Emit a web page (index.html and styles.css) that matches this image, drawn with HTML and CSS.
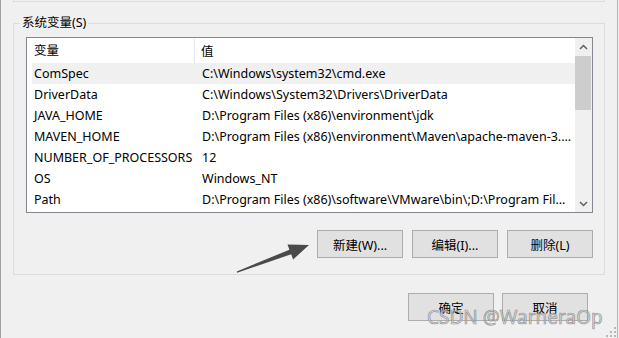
FILE: index.html
```html
<html lang="zh-CN">
<head>
    <meta charset="utf-8">
    <link rel="stylesheet" href="styles.css">
</head>
<body>
<div class="window">
    <div class="prev-group"></div>

    <fieldset class="group">
        <legend>系统变量(S)</legend>
        <div class="listbox">
            <div class="list">
                <div class="list-head">
                    <span class="head-name">变量</span>
                    <span class="head-value">值</span>
                </div>
                <div class="row selected"><span class="name">ComSpec</span><span class="value">C:\Windows\system32\cmd.exe</span></div>
                <div class="row"><span class="name">DriverData</span><span class="value">C:\Windows\System32\Drivers\DriverData</span></div>
                <div class="row"><span class="name">JAVA_HOME</span><span class="value">D:\Program Files (x86)\environment\jdk</span></div>
                <div class="row"><span class="name">MAVEN_HOME</span><span class="value">D:\Program Files (x86)\environment\Maven\apache-maven-3....</span></div>
                <div class="row"><span class="name">NUMBER_OF_PROCESSORS</span><span class="value">12</span></div>
                <div class="row"><span class="name">OS</span><span class="value">Windows_NT</span></div>
                <div class="row"><span class="name">Path</span><span class="value">D:\Program Files (x86)\software\VMware\bin\;D:\Program Fil...</span></div>
            </div>
            <div class="scrollbar">
                <span class="sb-btn">
                    <svg width="9" height="6" viewBox="0 0 9 6"><path d="M1 5 L4.5 1.5 L8 5" fill="none" stroke="#606060" stroke-width="1.5"/></svg>
                </span>
                <span class="sb-thumb"></span>
                <span class="sb-track"></span>
                <span class="sb-btn">
                    <svg width="9" height="6" viewBox="0 0 9 6"><path d="M1 1 L4.5 4.5 L8 1" fill="none" stroke="#606060" stroke-width="1.5"/></svg>
                </span>
            </div>
        </div>
        <div class="actions">
            <button class="btn">新建(W)...</button>
            <button class="btn">编辑(I)...</button>
            <button class="btn">删除(L)</button>
        </div>
    </fieldset>

    <div class="dialog-actions">
        <button class="btn">确定</button>
        <button class="btn">取消</button>
    </div>

    <!-- 标注箭头 -->
    <svg class="pointer" width="85" height="42" viewBox="0 0 85 42">
        <polygon points="79,9 57.5,8.5 59.4,13.7 6.8,35.4 7.2,36.8 61.2,18.3 63.1,23.5" fill="#4a4a4a"/>
    </svg>

    <div class="watermark">CSDN @WarneraOp</div>

    <svg class="grip" width="10" height="10" viewBox="0 0 10 10">
        <rect x="8" y="0" width="2" height="2" fill="#b8b8b8"/>
        <rect x="4" y="4" width="2" height="2" fill="#b8b8b8"/>
        <rect x="8" y="4" width="2" height="2" fill="#b8b8b8"/>
        <rect x="0" y="8" width="2" height="2" fill="#b8b8b8"/>
        <rect x="4" y="8" width="2" height="2" fill="#b8b8b8"/>
        <rect x="8" y="8" width="2" height="2" fill="#b8b8b8"/>
    </svg>
</div>
</body>
</html>
```

FILE: styles.css
```css
* {
    margin: 0;
    padding: 0;
    box-sizing: border-box;
}
body {
    background-color: #f0f0f0;
    font-family: "Noto Sans", "Noto Sans CJK SC", sans-serif;
    font-size: 12.5px;
    color: #000;
}
.window {
    position: relative;
    width: 618px;
    height: 338px;
    border-left: 1px solid #a0a0a0;
    border-right: 1px solid #b4b4b4;
    overflow: hidden;
}
.prev-group {
    width: 592px;
    height: 2px;
    margin-left: 12px;
    border: 1px solid #dcdcdc;
    border-top: none;
}
.group {
    width: 592px;
    margin-left: 12px;
    margin-top: 13px;
    padding: 6px 11px 16px 12px;
    border: 1px solid #dcdcdc;
}
.group legend {
    margin-left: -6px;
    padding: 0 2px;
    line-height: 16px;
}
.listbox {
    display: flex;
    width: 567px;
    height: 176px;
    border: 1px solid #828790;
    background-color: #fff;
}
.list {
    flex: 1;
    overflow: hidden;
}
.list-head {
    display: flex;
    height: 25px;
    align-items: center;
}
.head-name {
    width: 168px;
    height: 24px;
    line-height: 24px;
    padding-left: 7px;
    border-right: 1px solid #e5e5e5;
}
.head-value {
    padding-left: 6px;
}
.row {
    display: flex;
    height: 21px;
    line-height: 21px;
    margin-left: 5px;
    white-space: nowrap;
}
.row.selected {
    background-color: #f0f0f0;
}
.row .name {
    width: 170px;
    padding-left: 2px;
}
.row .value {
    flex: 1;
    overflow: hidden;
}
.scrollbar {
    display: flex;
    flex-direction: column;
    width: 17px;
    background-color: #f0f0f0;
}
.sb-btn {
    display: flex;
    height: 17px;
    align-items: center;
    justify-content: center;
}
.sb-thumb {
    height: 54px;
    margin: 1px 1px 0 0;
    background-color: #cdcdcd;
}
.sb-track {
    flex: 1;
}
.actions {
    display: flex;
    justify-content: flex-end;
    gap: 9px;
    margin-top: 17px;
}
.btn {
    width: 86px;
    height: 28px;
    border: 1px solid #adadad;
    background-color: #e1e1e1;
    font: inherit;
    color: #000;
}
.dialog-actions {
    display: flex;
    justify-content: flex-end;
    gap: 8px;
    margin-top: 18px;
    padding-right: 29px;
}
.pointer {
    position: absolute;
    left: 229px;
    top: 236px;
}
.watermark {
    position: absolute;
    left: 426px;
    top: 304px;
    font-family: "Noto Sans", sans-serif;
    font-size: 19px;
    color: rgba(210, 210, 210, 0.8);
    -webkit-text-stroke: 0.7px rgba(110, 110, 110, 0.65);
    white-space: nowrap;
}
.grip {
    position: absolute;
    right: 1px;
    bottom: 1px;
}
```
